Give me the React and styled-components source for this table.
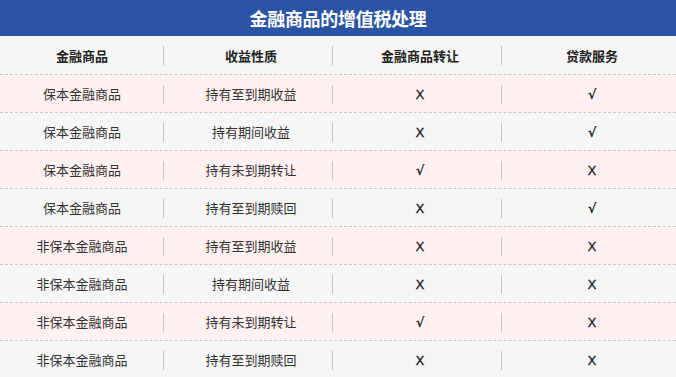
import styled, { createGlobalStyle } from "styled-components";

const rows = [
  ["保本金融商品", "持有至到期收益", "X", "√"],
  ["保本金融商品", "持有期间收益", "X", "√"],
  ["保本金融商品", "持有未到期转让", "√", "X"],
  ["保本金融商品", "持有至到期赎回", "X", "√"],
  ["非保本金融商品", "持有至到期收益", "X", "X"],
  ["非保本金融商品", "持有期间收益", "X", "X"],
  ["非保本金融商品", "持有未到期转让", "√", "X"],
  ["非保本金融商品", "持有至到期赎回", "X", "X"],
];

const headers = ["金融商品", "收益性质", "金融商品转让", "贷款服务"];

function App() {
  return (
    <>
      <GlobalStyle />
      <Table>
        <Title>金融商品的增值税处理</Title>
        <Row $bg="#f6f6f6">
          {headers.map((h, i) => (
            <Cell key={h}>
              <Head>{h}</Head>
              {i < 3 && <Divider />}
            </Cell>
          ))}
        </Row>
        {rows.map((r, ri) => (
          <Row key={ri} $bg={ri % 2 === 0 ? "#fff1f1" : "#f6f6f6"} $dashed>
            {r.map((c, i) => (
              <Cell key={i}>
                {i < 2 ? <Text>{c}</Text> : <Mark $check={c === "√"}>{c}</Mark>}
                {i < 3 && <Divider />}
              </Cell>
            ))}
          </Row>
        ))}
      </Table>
    </>
  );
}

const GlobalStyle = createGlobalStyle`
  body {
    margin: 0;
    background: #f6f6f6;
    font-family: "Noto Sans CJK SC", "Noto Sans", sans-serif;
  }
`;

const Table = styled.div`
  width: 676px;
`;

const Title = styled.div`
  height: 36px;
  background: #2b55a4;
  color: #fff;
  font-size: 18px;
  font-weight: 700;
  display: flex;
  align-items: center;
  justify-content: center;
  letter-spacing: -0.3px;
`;

const Row = styled.div`
  display: grid;
  grid-template-columns: repeat(4, 1fr);
  height: 38px;
  box-sizing: border-box;
  background: ${(p) => p.$bg};
  border-top: ${(p) => (p.$dashed ? "1px dashed #c8c8c8" : "none")};
`;

const Cell = styled.div`
  display: flex;
  align-items: center;
`;

const Text = styled.span`
  flex: 1;
  text-align: center;
  padding-left: 1px;
  font-size: 13px;
  color: #333;
`;

const Head = styled(Text)`
  font-weight: 600;
  color: #222;
`;

const Mark = styled.span`
  flex: 1;
  text-align: center;
  padding-left: 1px;
  margin-top: 2px;
  color: #1f2633;
  font-family: "DejaVu Sans", sans-serif;
  font-size: 13px;
  font-weight: ${(p) => (p.$check ? 700 : 400)};
  -webkit-text-stroke: ${(p) => (p.$check ? "0" : "0.3px #1f2633")};
`;

const Divider = styled.i`
  width: 1px;
  height: 19px;
  background: #c4c4c4;
  margin-right: 5px;
  margin-top: 1px;
`;

export default App;
